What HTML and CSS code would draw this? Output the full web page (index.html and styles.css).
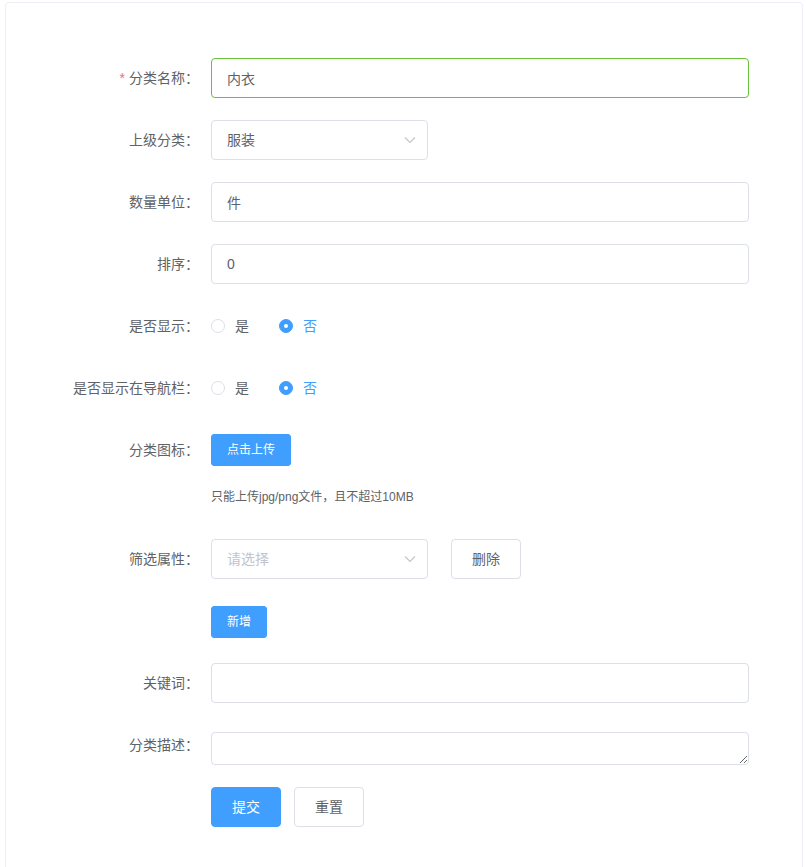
FILE: index.html
```html
<!DOCTYPE html>
<html lang="zh-CN">
<head>
<meta charset="utf-8">
<title>分类</title>
<link rel="stylesheet" href="styles.css">
</head>
<body>
<div class="card">
  <form class="form">
    <div class="item">
      <label class="label"><span class="req">*</span>分类名称：</label>
      <div class="content"><input class="input input-ok" type="text" value="内衣"></div>
    </div>
    <div class="item">
      <label class="label">上级分类：</label>
      <div class="content">
        <div class="select"><span class="select-text">服装</span>
          <svg class="arrow" width="14" height="14" viewBox="0 0 14 14"><polyline points="2,4.5 7,9.5 12,4.5" fill="none" stroke="#c0c4cc" stroke-width="1.1"/></svg>
        </div>
      </div>
    </div>
    <div class="item">
      <label class="label">数量单位：</label>
      <div class="content"><input class="input" type="text" value="件"></div>
    </div>
    <div class="item">
      <label class="label">排序：</label>
      <div class="content"><input class="input" type="text" value="0"></div>
    </div>
    <div class="item">
      <label class="label">是否显示：</label>
      <div class="content row">
        <span class="radio"><span class="dot"></span><span class="rlabel">是</span></span>
        <span class="radio on"><span class="dot"></span><span class="rlabel">否</span></span>
      </div>
    </div>
    <div class="item">
      <label class="label">是否显示在导航栏：</label>
      <div class="content row">
        <span class="radio"><span class="dot"></span><span class="rlabel">是</span></span>
        <span class="radio on"><span class="dot"></span><span class="rlabel">否</span></span>
      </div>
    </div>
    <div class="item">
      <label class="label">分类图标：</label>
      <div class="content">
        <div class="row"><button type="button" class="btn btn-primary btn-small">点击上传</button></div>
        <div class="tip">只能上传jpg/png文件，且不超过10MB</div>
      </div>
    </div>
    <div class="item">
      <label class="label">筛选属性：</label>
      <div class="content row">
        <div class="select"><span class="select-text placeholder">请选择</span>
          <svg class="arrow" width="14" height="14" viewBox="0 0 14 14"><polyline points="2,4.5 7,9.5 12,4.5" fill="none" stroke="#c0c4cc" stroke-width="1.1"/></svg>
        </div>
        <button type="button" class="btn btn-default btn-del">删除</button>
      </div>
    </div>
    <div class="item">
      <label class="label"></label>
      <div class="content row add-row"><button type="button" class="btn btn-primary btn-small">新增</button></div>
    </div>
    <div class="item">
      <label class="label">关键词：</label>
      <div class="content"><input class="input" type="text" value=""></div>
    </div>
    <div class="item">
      <label class="label">分类描述：</label>
      <div class="content bottom"><textarea class="textarea" rows="1"></textarea></div>
    </div>
    <div class="item">
      <label class="label"></label>
      <div class="content row">
        <button type="button" class="btn btn-primary">提交</button>
        <button type="button" class="btn btn-default btn-reset">重置</button>
      </div>
    </div>
  </form>
</div>
</body>
</html>
```
FILE: styles.css
```css
html, body {
  margin: 0;
  padding: 0;
  background: #fff;
}
body {
  font-family: "Liberation Sans", "Noto Sans CJK SC", sans-serif;
  color: #606266;
  font-size: 14px;
}
.card {
  box-sizing: border-box;
  width: 798px;
  margin: 2px 0 0 5px;
  border: 1px solid #ebeef5;
  border-radius: 4px;
  padding: 55px 53px 60px 55px;
  min-height: 900px;
}
.form {
  margin: 0;
}
.item {
  display: flex;
  margin-bottom: 22px;
}
.label {
  flex: 0 0 150px;
  box-sizing: border-box;
  padding-right: 12px;
  text-align: right;
  line-height: 40px;
  font-size: 14px;
  color: #606266;
  white-space: nowrap;
}
.req {
  color: #f56c6c;
  margin-right: 4px;
}
.content {
  flex: 1;
  line-height: 40px;
  font-size: 14px;
  min-width: 0;
}
.row {
  display: flex;
  align-items: center;
  height: 40px;
}
.add-row {
  padding-top: 2px;
  box-sizing: border-box;
}
.bottom {
  display: flex;
  align-items: flex-end;
  height: 40px;
}
.input {
  display: block;
  box-sizing: border-box;
  width: 100%;
  height: 40px;
  border: 1px solid #dcdfe6;
  border-radius: 4px;
  padding: 0 15px;
  font-family: inherit;
  font-size: 14px;
  color: #606266;
  outline: none;
  background: #fff;
}
.input-ok {
  border-color: #67c23a;
}
.select {
  position: relative;
  box-sizing: border-box;
  width: 217px;
  height: 40px;
  border: 1px solid #dcdfe6;
  border-radius: 4px;
  padding: 0 15px;
  line-height: 38px;
  color: #606266;
}
.placeholder {
  color: #c0c4cc;
}
.arrow {
  position: absolute;
  right: 10px;
  top: 12px;
}
.radio {
  display: inline-flex;
  align-items: center;
  margin-right: 30px;
  color: #606266;
}
.dot {
  box-sizing: border-box;
  width: 14px;
  height: 14px;
  border: 1px solid #dcdfe6;
  border-radius: 50%;
  background: #fff;
  position: relative;
}
.radio.on .dot {
  border-color: #409eff;
  background: #409eff;
}
.radio.on .dot::after {
  content: "";
  position: absolute;
  left: 4px;
  top: 4px;
  width: 4px;
  height: 4px;
  border-radius: 50%;
  background: #fff;
}
.rlabel {
  padding-left: 10px;
  line-height: 1;
}
.radio.on .rlabel {
  color: #409eff;
}
.btn {
  box-sizing: border-box;
  height: 40px;
  padding: 0 20px;
  border: 1px solid #dcdfe6;
  border-radius: 4px;
  font-family: inherit;
  font-size: 14px;
  line-height: 1;
  background: #fff;
  color: #606266;
  cursor: pointer;
  white-space: nowrap;
}
.btn-primary {
  background: #409eff;
  border-color: #409eff;
  color: #fff;
}
.btn-small {
  height: 32px;
  padding: 0 15px;
  font-size: 12px;
  border-radius: 3px;
}
.btn-del {
  width: 70px;
  margin-left: 23px;
}
.btn-reset {
  margin-left: 13px;
}
.tip {
  margin-top: 7px;
  font-size: 12px;
  color: #606266;
  line-height: 40px;
}
.textarea {
  display: block;
  box-sizing: border-box;
  width: 100%;
  height: 33px;
  padding: 5px 15px;
  border: 1px solid #dcdfe6;
  border-radius: 4px;
  font-family: inherit;
  font-size: 14px;
  line-height: 1.5;
  color: #606266;
  resize: vertical;
  outline: none;
  margin: 0;
}
```
